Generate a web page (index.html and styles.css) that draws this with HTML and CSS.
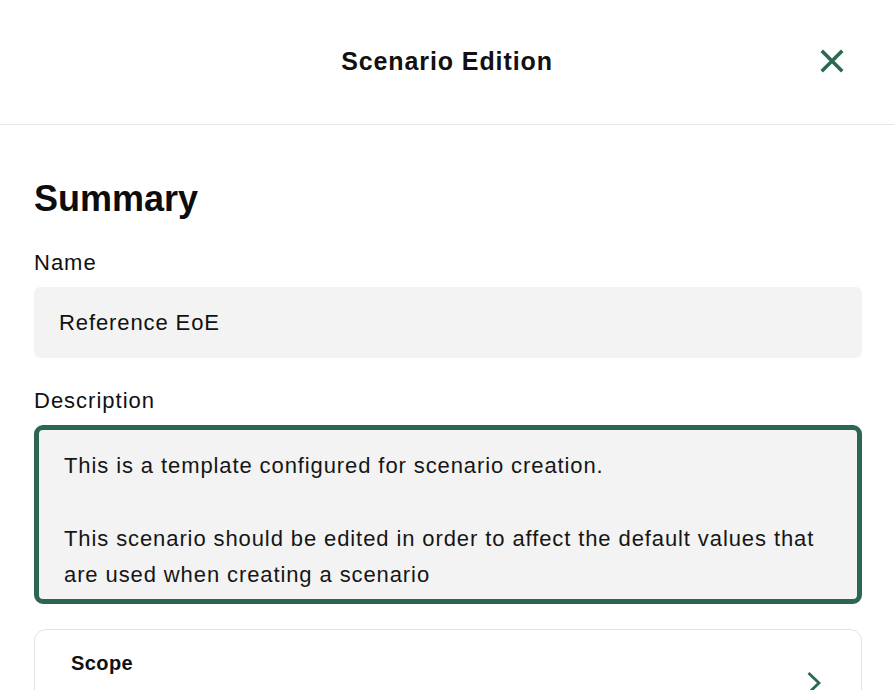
FILE: index.html
```html
<!DOCTYPE html>
<html lang="en">
<head>
<meta charset="utf-8">
<title>Scenario Edition</title>
<link rel="stylesheet" href="styles.css">
</head>
<body>
<header class="topbar">
  <div class="topbar-spacer"></div>
  <h1 class="topbar-title">Scenario Edition</h1>
  <button class="close-btn" aria-label="Close">
    <svg width="30" height="30" viewBox="0 0 30 30" aria-hidden="true">
      <path d="M6 6 L24 24 M24 6 L6 24" stroke="currentColor" stroke-width="3.6" stroke-linecap="square" fill="none"/>
    </svg>
  </button>
</header>
<main class="content">
  <h2 class="section-title">Summary</h2>
  <div class="field">
    <label class="field-label">Name</label>
    <div class="input">Reference EoE</div>
  </div>
  <div class="field field-desc">
    <label class="field-label">Description</label>
    <div class="textarea">
      <p>This is a template configured for scenario creation.</p>
      <p class="blank">&nbsp;</p>
      <p>This scenario should be edited in order to affect the default values that are used when creating a scenario</p>
    </div>
  </div>
  <section class="card">
    <div class="card-text">
      <h3 class="card-title">Scope</h3>
    </div>
    <svg class="chevron" width="18" height="26" viewBox="0 0 18 26" aria-hidden="true">
      <path d="M3.5 3 L14 13 L3.5 23" stroke="currentColor" stroke-width="2.8" fill="none"/>
    </svg>
  </section>
</main>
</body>
</html>
```
FILE: styles.css
```css
* { box-sizing: border-box; }

html, body {
  margin: 0;
  padding: 0;
  background: #ffffff;
  overflow: hidden;
}

body {
  font-family: "Liberation Sans", Arial, sans-serif;
  color: #111111;
  width: 894px;
  height: 690px;
}

.topbar {
  height: 125px;
  border-bottom: 1px solid #e6e6e6;
  display: grid;
  grid-template-columns: 1fr auto 1fr;
  align-items: center;
}

.topbar-title {
  margin: 0;
  font-size: 25px;
  font-weight: 700;
  line-height: 30px;
  letter-spacing: 0.9px;
  padding-bottom: 3px;
  color: #111111;
}

.close-btn {
  justify-self: end;
  margin-right: 47px;
  margin-bottom: 2px;
  padding: 0;
  border: 0;
  background: none;
  color: #2c6a50;
  width: 30px;
  height: 30px;
  display: flex;
}

.content {
  padding: 0 32px 0 34px;
}

.section-title {
  margin: 52px 0 0;
  font-size: 36px;
  line-height: 44px;
  font-weight: 700;
  color: #0d0d0d;
}

.field {
  margin-top: 28px;
}

.field-desc {
  margin-top: 29px;
}

.field-label {
  display: block;
  font-size: 22px;
  line-height: 28px;
  letter-spacing: 1px;
  margin-bottom: 10px;
  color: #111111;
}

.input {
  height: 71px;
  background: #f3f3f3;
  border-radius: 6px;
  padding: 0 25px;
  display: flex;
  align-items: center;
  font-size: 22px;
  letter-spacing: 0.9px;
  color: #111111;
}

.textarea {
  height: 179px;
  background: #f3f3f3;
  border: 5px solid #2c6650;
  border-radius: 9px;
  padding: 18px 24px 8px 25px;
  font-size: 22px;
  line-height: 36.3px;
  letter-spacing: 0.9px;
  color: #161616;
  overflow: hidden;
}

.textarea p {
  margin: 0;
}

.card {
  margin-top: 25px;
  min-height: 108px;
  border: 1px solid #e2e2e2;
  border-radius: 12px;
  padding: 21px 38px 0 36px;
  display: flex;
  justify-content: space-between;
  align-items: center;
}

.card-text {
  align-self: flex-start;
}

.card-title {
  margin: 0;
  font-size: 20px;
  line-height: 24px;
  font-weight: 700;
  letter-spacing: 0.4px;
  color: #111111;
}

.chevron {
  color: #2c6a50;
  margin-top: -21px;
}
```
